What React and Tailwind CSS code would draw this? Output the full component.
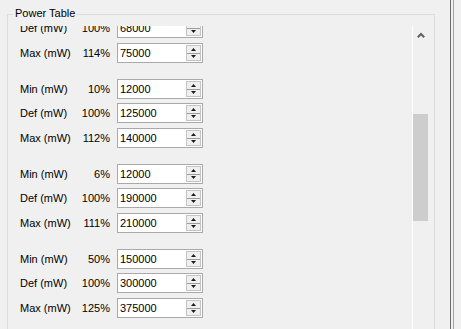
const groups = [
  [
    ['Min (mW)', '18%', '12000'],
    ['Def (mW)', '100%', '68000'],
    ['Max (mW)', '114%', '75000'],
  ],
  [
    ['Min (mW)', '10%', '12000'],
    ['Def (mW)', '100%', '125000'],
    ['Max (mW)', '112%', '140000'],
  ],
  [
    ['Min (mW)', '6%', '12000'],
    ['Def (mW)', '100%', '190000'],
    ['Max (mW)', '111%', '210000'],
  ],
  [
    ['Min (mW)', '50%', '150000'],
    ['Def (mW)', '100%', '300000'],
    ['Max (mW)', '125%', '375000'],
  ],
];

const rowHeights = ['h-[24px]', 'h-[25px]', 'h-[24px]'];

function Spinner() {
  return (
    <div className="w-[15px] my-[1px] mr-[1px] flex flex-col border border-[#c4c4c4] bg-[#efefef]">
      <div className="flex-1 flex items-center justify-center border-b border-[#9c9c9c]">
        <svg width="5" height="3" viewBox="0 0 5 3">
          <path d="M0 3 L2.5 0 L5 3 Z" fill="#1c1c1c" />
        </svg>
      </div>
      <div className="flex-1 flex items-center justify-center">
        <svg width="5" height="3" viewBox="0 0 5 3">
          <path d="M0 0 L5 0 L2.5 3 Z" fill="#1c1c1c" />
        </svg>
      </div>
    </div>
  );
}

function Row({ label, pct, value, h }) {
  return (
    <div className={`${h} flex items-start`}>
      <div className="mt-[2px] h-[20px] flex items-center whitespace-nowrap">
        <span className="w-[50px] shrink-0">{label}</span>
        <span className="w-[40px] shrink-0 text-right">{pct}</span>
        <div className="ml-[7px] w-[86px] h-[20px] flex border border-[#a9a9a9] bg-white">
          <span className="flex-1 pl-[2px] leading-[18px]">{value}</span>
          <Spinner />
        </div>
      </div>
    </div>
  );
}

export default function App() {
  return (
    <div
      className="w-[461px] h-[329px] bg-[#f0f0f0] overflow-hidden flex text-[11px] text-black"
      style={{ fontFamily: '"Liberation Sans", Arial, sans-serif' }}
    >
      <div className="w-[450px] h-full pl-[7px] pt-[14px] flex flex-col">
        <div className="relative w-[428px] flex-1 border-l border-t border-r border-[#dcdcdc] pt-[11px] flex flex-col">
          <div className="absolute top-[-8px] left-[5px] px-[2px] bg-[#f0f0f0] leading-[13px]">
            Power Table
          </div>
          <div className="flex flex-1 min-h-0">
            <div className="w-[404px] overflow-hidden">
              <div className="-mt-[34px] pl-[12px]">
                {groups.map((g, gi) => (
                  <div key={gi} className="mb-[12px]">
                    {g.map((r, ri) => (
                      <Row key={ri} label={r[0]} pct={r[1]} value={r[2]} h={rowHeights[ri]} />
                    ))}
                  </div>
                ))}
              </div>
            </div>
            <div className="w-[1px] bg-white" />
            <div className="w-[15px] flex flex-col">
              <div className="h-[17px] flex items-center justify-center">
                <svg width="8" height="6" viewBox="0 0 8 6">
                  <path d="M0.8 5.2 L4 2 L7.2 5.2" fill="none" stroke="#606060" strokeWidth="2" />
                </svg>
              </div>
              <div className="h-[71px]" />
              <div className="h-[107px] bg-[#cdcdcd]" />
            </div>
          </div>
        </div>
      </div>
      <div className="w-[1px] h-full bg-[#6a6a6a]" />
      <div className="w-[2px] h-full" />
      <div className="w-[1px] h-full bg-[#a3a3a3]" />
    </div>
  );
}
